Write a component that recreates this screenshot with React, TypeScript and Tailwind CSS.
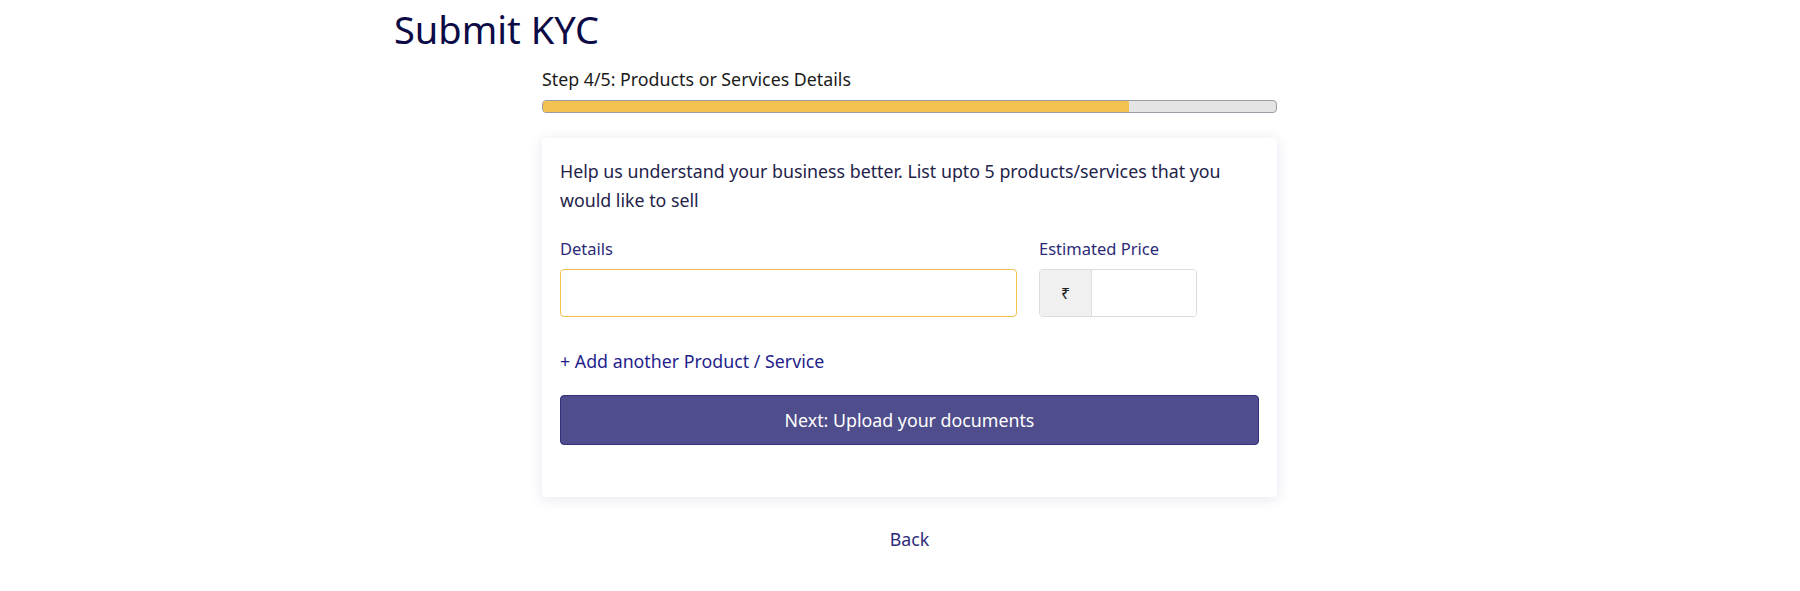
export default function App() {
  return (
    <div className="min-h-screen bg-white pl-[394px] font-['Noto_Sans',sans-serif]">
      <h1 className="pt-[4px] text-[38px] leading-[50px] text-[#0c0b45]">Submit KYC</h1>
      <div className="ml-[148px] w-[735px]">
        <p className="mt-[14px] text-[17.8px] leading-[22px] text-[#1b1b1b]">Step 4/5: Products or Services Details</p>
        <div className="mt-[10px] h-[13px] overflow-hidden rounded-[4px] border border-[#9b9da6] bg-[#e4e4e4]">
          <div className="h-full w-[80%] bg-[#f3c14f]" />
        </div>

        <div className="mt-[25px] rounded-[4px] bg-white px-[18px] pt-[19px] pb-[52px] shadow-[0_2px_14px_rgba(40,50,140,0.12)]">
          <p className="text-[17.8px] leading-[29px] text-[#23234a]">
            Help us understand your business better. List upto 5 products/services that you would like to sell
          </p>

          <div className="mt-[23px] flex gap-[22px]">
            <div className="w-[457px]">
              <label className="block text-[16.5px] leading-[22px] text-[#2c2a78]">Details</label>
              <input
                type="text"
                className="mt-[9px] h-[48px] w-full rounded-[4px] border border-[#f3c14f] bg-white px-3 outline-none"
              />
            </div>
            <div className="w-[158px]">
              <label className="block text-[16.5px] leading-[22px] text-[#2c2a78]">Estimated Price</label>
              <div className="mt-[9px] flex h-[48px] overflow-hidden rounded-[4px] border border-[#dcdcdc]">
                <span className="flex w-[52px] items-center justify-center border-r border-[#dcdcdc] bg-[#f0f0f0] text-[16px] text-[#222]">
                  ₹
                </span>
                <input type="text" className="min-w-0 flex-1 bg-white px-2 outline-none" />
              </div>
            </div>
          </div>

          <a className="mt-[31px] block text-[17.8px] leading-[26px] text-[#1f1f8c]" href="#">
            + Add another Product / Service
          </a>

          <button className="mt-[21px] h-[50px] w-full rounded-[4px] border border-[#33317a] bg-[#4f4d8b] text-[17.8px] text-white">
            Next: Upload your documents
          </button>
        </div>

        <div className="mt-[29px] text-center">
          <a className="text-[17.8px] leading-[26px] text-[#2e2c7a]" href="#">
            Back
          </a>
        </div>
      </div>
    </div>
  );
}
